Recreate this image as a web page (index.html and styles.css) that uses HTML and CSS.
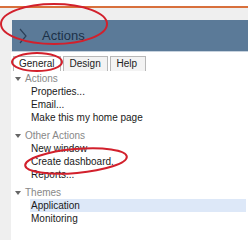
FILE: index.html
```html
<!DOCTYPE html>
<html lang="en">
<head>
    <meta charset="UTF-8">
    <title>Actions</title>
    <link rel="stylesheet" href="styles.css">
</head>
<body>

<div class="topline"></div>
<div class="frame">
    <div class="titlebar">
        <svg class="chevron" width="10" height="16" viewBox="0 0 10 16">
            <path d="M2 1 L8 8 L2 15" fill="none" stroke="#2b4058" stroke-width="1.2"/>
        </svg>
        <span class="title">Actions</span>
    </div>
    <div class="tabs">
        <div class="tab active">General</div>
        <div class="tab">Design</div>
        <div class="tab">Help</div>
    </div>
    <div class="panel">
        <div class="group">
            <div class="head"><span class="arrow"></span>Actions</div>
            <div class="item">Properties...</div>
            <div class="item">Email...</div>
            <div class="item">Make this my home page</div>
        </div>
        <div class="group">
            <div class="head"><span class="arrow"></span>Other Actions</div>
            <div class="item">New window</div>
            <div class="item">Create dashboard.</div>
            <div class="item">Reports...</div>
        </div>
        <div class="group">
            <div class="head"><span class="arrow"></span>Themes</div>
            <div class="item selected">Application</div>
            <div class="item">Monitoring</div>
        </div>
    </div>
</div>

<!-- red marker circles drawn over the screenshot -->
<svg class="marks" width="248" height="240" viewBox="0 0 248 240">
    <ellipse cx="54" cy="24" rx="53" ry="20" fill="none" stroke="#d2202c" stroke-width="2"/>
    <ellipse cx="37" cy="62" rx="25" ry="9" fill="none" stroke="#d2202c" stroke-width="2"/>
    <ellipse cx="76" cy="161" rx="51" ry="12" fill="none" stroke="#d2202c" stroke-width="2" transform="rotate(-5 76 161)"/>
</svg>

</body>
</html>
```

FILE: styles.css
```css
body {
    margin: 0;
    background: #fff;
    font-family: "Liberation Sans", Arial, sans-serif;
    position: relative;
    height: 240px;
    overflow: hidden;
}

.topline {
    margin-top: 6px;
    height: 2px;
    background: #d8703c;
}

.frame {
    background: #efefef;
    padding: 12px 0 0 11px;
    height: 230px;
}

.titlebar {
    margin-left: 1px;
    height: 31px;
    background: #5b7a98;
    border-bottom: 1px solid #c6d2de;
    display: flex;
    align-items: center;
}

.chevron {
    margin-left: 6px;
}

.title {
    margin-left: 14px;
    font-size: 13px;
    color: #1c3148;
}

.tabs {
    background: #fff;
    display: flex;
    gap: 2px;
    padding: 4px 0 0 2px;
    height: 15px;
}

.tab {
    font-size: 10px;
    line-height: 14px;
    padding: 0 6px;
    border: 1px solid #b8b8b8;
    border-bottom: none;
    background: #f3f3f3;
    color: #222;
}

.tab.active {
    background: #fff;
    padding: 0 5px;
}

.tab:nth-child(2) {
    width: 31px;
}

.tab:nth-child(3) {
    width: 22px;
}

.panel {
    background: #fff;
    height: 170px;
    padding-top: 1px;
}

.group {
    margin-bottom: 5px;
}

.head {
    font-size: 10px;
    line-height: 13px;
    color: #888;
    padding-left: 4px;
    display: flex;
    align-items: center;
}

.arrow {
    width: 0;
    height: 0;
    border-left: 3px solid transparent;
    border-right: 3px solid transparent;
    border-top: 4px solid #666;
    margin-right: 4px;
}

.item {
    font-size: 10px;
    line-height: 13px;
    color: #1a1a1a;
    padding-left: 20px;
}

.item.selected {
    margin-left: 19px;
    padding-left: 1px;
    margin-right: 2px;
    background: #dde8f8;
}

.marks {
    position: absolute;
    left: 0;
    top: 0;
}
```
